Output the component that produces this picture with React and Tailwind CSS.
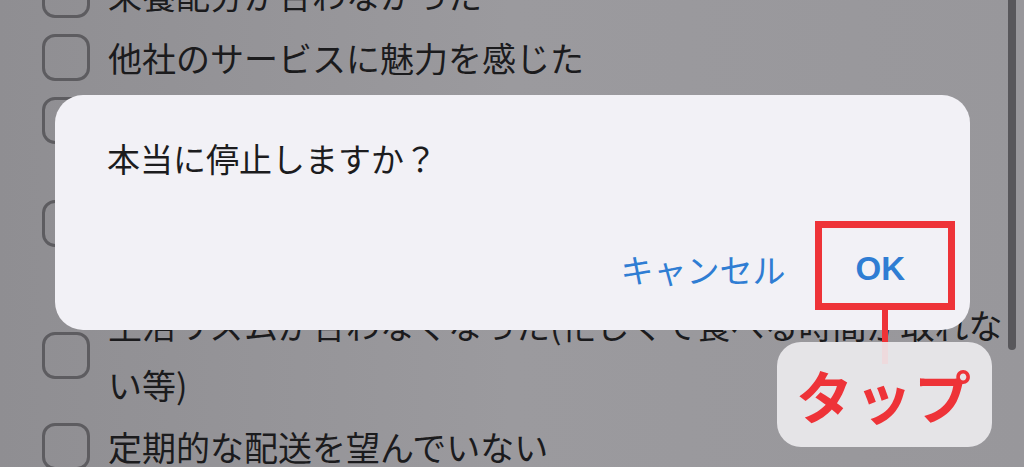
const font = { fontFamily: '"Noto Sans CJK JP", "Noto Sans", sans-serif' };

function Row({ lines, h }) {
  return (
    <div className={`flex items-center gap-[18px] ${h}`}>
      <span className="w-[48px] h-[47px] shrink-0 rounded-[13px] border-[3px] border-[#5d5c60]" />
      <div className="text-[34px] leading-[60px] text-[#1b1b1d] whitespace-nowrap">
        {lines.map((l, i) => (
          <div key={i}>{l}</div>
        ))}
      </div>
    </div>
  );
}

export default function App() {
  return (
    <div
      className="relative w-[1024px] h-[467px] overflow-hidden bg-gradient-to-r from-[#8f8e92] via-[#9b9a9e] to-[#98979b]"
      style={font}
    >
      {/* list behind the overlay */}
      <div className="pl-[42px] mt-[-37px] flex flex-col">
        <Row h="h-[63px]" lines={['栄養配分が合わなかった']} />
        <Row h="h-[63px]" lines={['他社のサービスに魅力を感じた']} />
        <Row h="h-[63px]" lines={['価格が高い']} />
        <Row h="h-[143px]" lines={['商品の量が多すぎた', '']} />
        <Row h="h-[120px]" lines={['生活リズムが合わなくなった(忙しくて食べる時間が取れな', 'い等)']} />
        <Row h="h-[63px]" lines={['定期的な配送を望んでいない']} />
      </div>

      {/* scrollbar */}
      <div className="absolute right-[8px] top-[-10px] w-[8px] h-[360px] rounded-full bg-[#58575b]" />

      {/* alert dialog */}
      <div className="absolute left-[55px] top-[95px] w-[915px] h-[235px] rounded-[28px] bg-[#f2f1f6] flex flex-col">
        <div className="pl-[52px] pt-[40px] text-[33px] leading-[46px] text-[#1c1c1e]">本当に停止しますか？</div>
        <div className="mt-auto mb-[38px] flex justify-end items-center pr-[65px] gap-[70px] text-[33px] leading-[46px] text-[#2f7dd3]">
          <span>キャンセル</span>
          <span className="font-bold" style={{ fontFamily: '"Liberation Sans", Arial, sans-serif' }}>OK</span>
        </div>
      </div>

      {/* annotation */}
      <div className="absolute left-[815px] top-[221px] w-[140px] h-[89px] border-[7px] border-[#ee3338]" />
      <div className="absolute left-[882px] top-[310px] w-[6px] h-[54px] bg-[#ee3338]" />
      <div className="absolute left-[777px] top-[342px] w-[215px] h-[105px] rounded-[24px] bg-[#edecef]/90 flex items-center justify-center">
        <span className="text-[57px] font-bold text-[#ee3338] tracking-[2px] leading-none">タップ</span>
      </div>
    </div>
  );
}
